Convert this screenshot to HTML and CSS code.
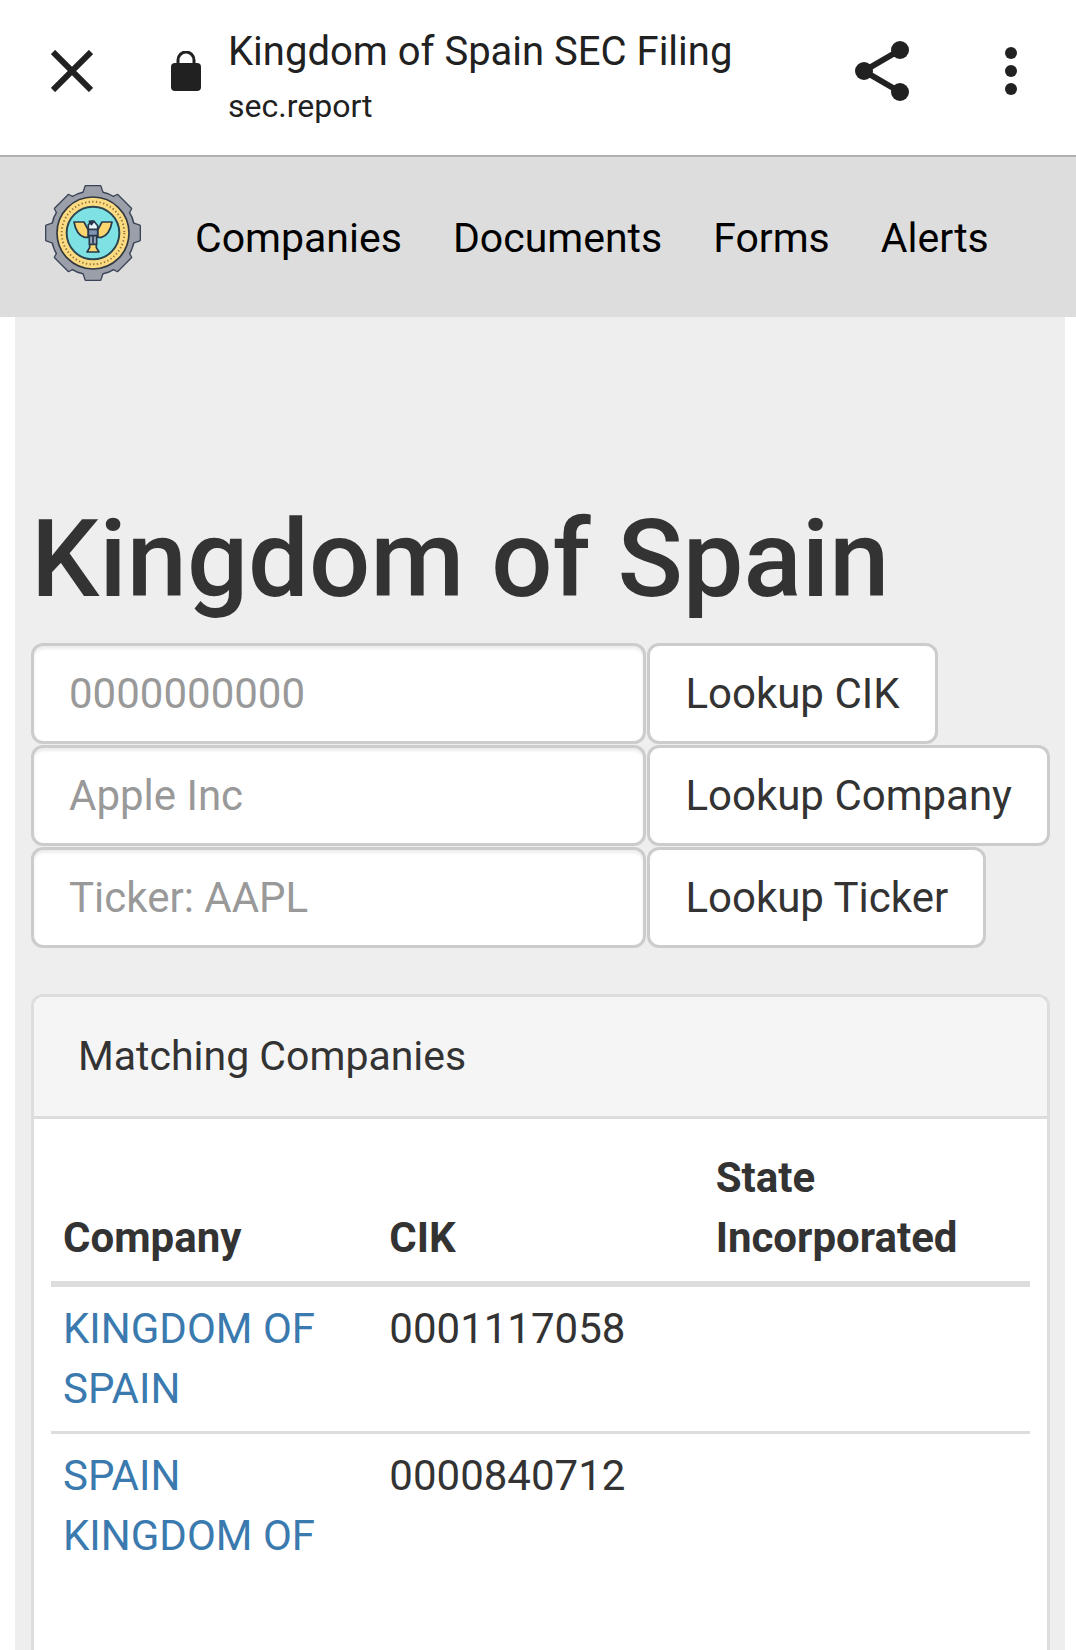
FILE: index.html
```html
<!DOCTYPE html>
<html lang="en">
<head>
<meta charset="utf-8">
<meta name="viewport" content="width=device-width, initial-scale=1">
<title>Kingdom of Spain SEC Filing</title>
<link rel="stylesheet" href="styles.css">
</head>
<body>
<header class="toolbar">
  <button class="icon-button close" type="button" aria-label="Close">
    <svg width="42" height="42" viewBox="0 0 42 42"><path d="M2 2 40 40M40 2 2 40" stroke="currentColor" stroke-width="6" fill="none"/></svg>
  </button>
  <div class="lock">
    <svg width="30" height="40" viewBox="0 0 30 40"><rect y="12" width="30" height="28" rx="4" fill="currentColor"/><path d="M7 14V9a8 8 0 0 1 16 0v5" fill="none" stroke="currentColor" stroke-width="3"/></svg>
  </div>
  <div class="site">
    <div class="site-title">Kingdom of Spain SEC Filing</div>
    <div class="site-host">sec.report</div>
  </div>
  <button class="icon-button" type="button" aria-label="Share">
    <svg width="54" height="60" viewBox="0 0 54 60"><path d="M45 9 9 30 45 51" fill="none" stroke="currentColor" stroke-width="6"/><g fill="currentColor"><circle cx="45" cy="9" r="9"/><circle cx="9" cy="30" r="9"/><circle cx="45" cy="51" r="9"/></g></svg>
  </button>
  <button class="icon-button more" type="button" aria-label="More options">
    <svg width="12" height="48" viewBox="0 0 12 48"><g fill="currentColor"><circle cx="6" cy="6" r="6"/><circle cx="6" cy="24" r="6"/><circle cx="6" cy="42" r="6"/></g></svg>
  </button>
</header>

<nav class="navbar">
  <a class="logo" href="#" aria-label="Home">
    <svg width="96" height="96" viewBox="-144 -144 288 288">
      <defs>
        <g id="gear">
          <circle r="124"/>
          <path id="tooth" d="M-29-118-22-140H22L29-118 22 0H-22Z"/>
          <use href="#tooth" transform="rotate(90)"/>
          <use href="#tooth" transform="rotate(180)"/>
          <use href="#tooth" transform="rotate(270)"/>
          <g id="corners">
            <path id="corner" d="M-33-118-29-132H29L33-118 22 0H-22Z" transform="rotate(45)"/>
            <use href="#corner" transform="rotate(90)"/>
            <use href="#corner" transform="rotate(180)"/>
            <use href="#corner" transform="rotate(270)"/>
          </g>
        </g>
      </defs>
      <use href="#gear" fill="#3c4558" stroke="#3c4558" stroke-width="8" stroke-linejoin="round"/>
      <use href="#gear" fill="#9b9fa9"/>
      <circle r="108" fill="#fbdc82" stroke="#34383f" stroke-width="5"/>
      <circle r="94" fill="none" stroke="#9a7335" stroke-width="6" stroke-dasharray="4 7"/>
      <circle r="79" fill="#7ee1e4" stroke="#2c4650" stroke-width="6"/>
      <g stroke="#27384a" stroke-width="5" stroke-linejoin="round">
        <path d="M-57-33H-27L-14-9V13H-25C-43 8-53-10-57-33Z" fill="#fbd66f"/>
        <path d="M57-33H27L14-9V13H25C43 8 53-10 57-33Z" fill="#fbd66f"/>
        <path d="M-10 32V44L-18 57H18L10 44V32Z" fill="#fbd66f"/>
        <path d="M-11 6H11V34H-11Z" fill="#9aa6bd"/>
        <path d="M-14-12H14V8H-14Z" fill="#8194b3"/>
        <path d="M-14-11V-24L-6-35H3L14-22V-11Z" fill="#e8f6fb"/>
        <path d="M-11-35H3L-5-25ZM0 8V32" fill="#27384a"/>
      </g>
    </svg>
  </a>
  <div class="links">
    <a href="#">Companies</a>
    <a href="#">Documents</a>
    <a href="#">Forms</a>
    <a href="#">Alerts</a>
  </div>
</nav>

<main class="content">
  <h1>Kingdom of Spain</h1>
  <form class="lookup">
    <input type="text" placeholder="0000000000" aria-label="CIK">
    <button type="button">Lookup CIK</button>
    <input type="text" placeholder="Apple Inc" aria-label="Company">
    <button type="button">Lookup Company</button>
    <input type="text" placeholder="Ticker: AAPL" aria-label="Ticker">
    <button type="button">Lookup Ticker</button>
  </form>
  <section class="panel">
    <div class="panel-heading">Matching Companies</div>
    <div class="panel-body">
      <table>
        <thead>
          <tr><th scope="col">Company</th><th scope="col">CIK</th><th scope="col">State Incorporated</th></tr>
        </thead>
        <tbody>
          <tr><td><a href="#">KINGDOM OF SPAIN</a></td><td>0001117058</td><td></td></tr>
          <tr><td><a href="#">SPAIN KINGDOM OF</a></td><td>0000840712</td><td></td></tr>
        </tbody>
      </table>
    </div>
  </section>
</main>
</body>
</html>
```
FILE: styles.css
```css
* { box-sizing: border-box; }

body {
  margin: 0;
  min-height: 100vh;
  display: flex;
  flex-direction: column;
  background: #fff;
  color: #333;
  font: 42px/60px Roboto, "Liberation Sans", sans-serif;
}

a { color: #3a7aae; text-decoration: none; }
svg { display: block; }

.toolbar {
  display: flex;
  align-items: flex-start;
  padding: 28px 59px 29px 51px;
  border-bottom: 2px solid #b0b0b0;
  background: #fff;
  color: #212121;
}

.icon-button,
.lock {
  display: flex;
  align-items: center;
  height: 86px;
  padding: 0;
  border: 0;
  background: none;
  color: inherit;
}

.close { margin-right: 78px; }
.lock { margin-right: 27px; }
.more { margin-left: 96px; }

.site { flex: 1; }
.site-title { font-size: 40px; line-height: 48px; }
.site-host { margin-top: 10px; font-size: 32px; line-height: 40px; }

.navbar {
  display: flex;
  align-items: flex-start;
  gap: 54px;
  padding: 28px 45px 36px;
  background: #ddd;
  font-size: 41px;
}

.links {
  display: flex;
  gap: 51px;
  padding-top: 23px;
  padding-bottom: 13px;
}

.links a { color: #000; }

.content {
  flex: 1;
  display: flex;
  flex-direction: column;
  margin: 0 11px 0 15px;
  padding: 182px 15px 0 16px;
  background: #eee;
}

h1 {
  margin: 0 0 23px;
  font-size: 108px;
  font-weight: 500;
  line-height: 121px;
}

.lookup {
  display: grid;
  grid-template-columns: minmax(0, 1fr) max-content;
  gap: 1px;
  margin-bottom: 46px;
}

.lookup input,
.lookup button {
  height: 101px;
  padding: 0 35px;
  border: 3px solid #ccc;
  border-radius: 12px;
  background: #fff;
  color: #333;
  font: inherit;
}

.lookup input {
  width: 100%;
  box-shadow: inset 0 3px 3px rgba(0, 0, 0, 0.075);
}

.lookup input::placeholder { color: #999; opacity: 1; }
.lookup button { justify-self: start; }

.panel {
  flex: 1;
  border: 3px solid #ddd;
  border-bottom: 0;
  border-radius: 12px 12px 0 0;
  background: #fff;
}

.panel-heading {
  padding: 29px 44px 30px;
  border-bottom: 3px solid #ddd;
  border-radius: 9px 9px 0 0;
  background: #f5f5f5;
  font-size: 41px;
}

.panel-body { padding: 17px; }

table {
  width: 100%;
  table-layout: fixed;
  border-collapse: separate;
  border-spacing: 0;
}

th,
td {
  padding: 12px;
  text-align: left;
  vertical-align: top;
}

th {
  padding-bottom: 13px;
  border-bottom: 6px solid #ddd;
  font-weight: 700;
  vertical-align: bottom;
}

tbody tr + tr td { border-top: 3px solid #ddd; }
```
